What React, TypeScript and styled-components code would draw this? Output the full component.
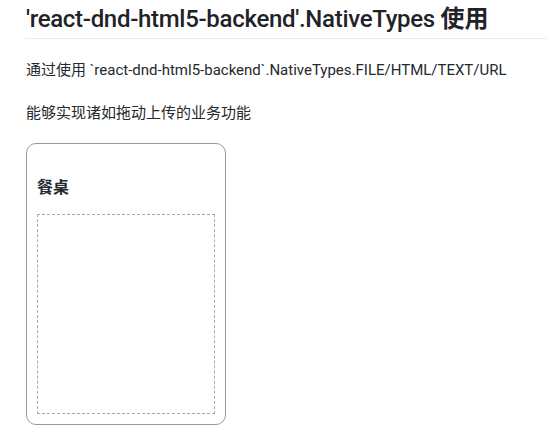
import { FC } from "react";
import styled, { createGlobalStyle } from "styled-components";

const GlobalStyle = createGlobalStyle`
  html, body {
    margin: 0;
    padding: 0;
    background: #fff;
  }
  body {
    font-family: Roboto, "Noto Sans CJK SC", sans-serif;
    color: #24292e;
  }
`;

const App: FC = () => {
  return (
    <>
      <GlobalStyle />
      <Page>
        <Heading>
          'react-dnd-html5-backend'.NativeTypes <Strong>使用</Strong>
        </Heading>
        <Text>通过使用 `react-dnd-html5-backend`.NativeTypes.FILE/HTML/TEXT/URL</Text>
        <Text>能够实现诸如拖动上传的业务功能</Text>
        <Card>
          <CardTitle>餐桌</CardTitle>
          <DropZone />
        </Card>
      </Page>
    </>
  );
};

const Page = styled.div`
  padding: 3px 0 0 25px;
`;

const Heading = styled.h2`
  margin: 0;
  padding: 0 0 3px 1px;
  font-size: 24px;
  line-height: 32px;
  font-weight: 500;
  letter-spacing: -0.3px;
  color: #1f2328;
  border-bottom: 1px solid #eaecef;
`;

const Strong = styled.span`
  font-weight: 700;
  letter-spacing: 0;
`;

const Text = styled.p`
  margin: 20px 0 0 1px;
  font-size: 15px;
  line-height: 23px;
  color: #24292e;
`;

const Card = styled.div`
  box-sizing: border-box;
  width: 200px;
  height: 282px;
  margin: 18px 0 0 1px;
  padding: 10px;
  border: 1px solid #999;
  border-radius: 10px;
  display: flex;
  flex-direction: column;
`;

const CardTitle = styled.h4`
  margin: 24px 0 16px;
  font-size: 16px;
  line-height: 20px;
  font-weight: 700;
  color: #24292e;
`;

const DropZone = styled.div`
  flex: 1;
  border: 1px dashed #aaa;
`;

export default App;
